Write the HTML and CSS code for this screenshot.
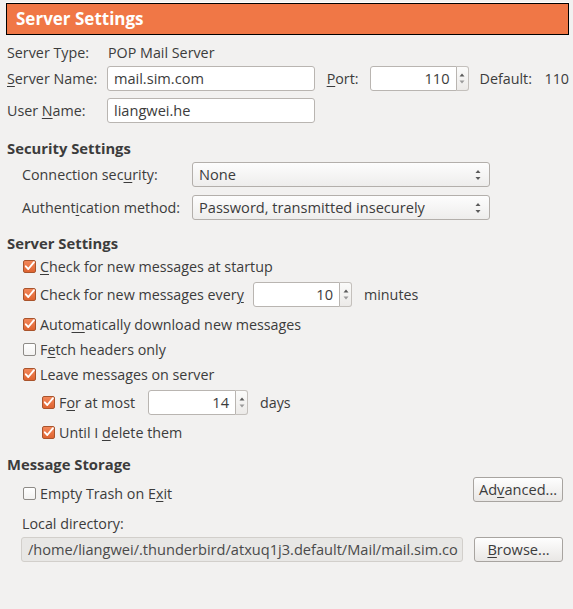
FILE: index.html
```html
<!DOCTYPE html>
<html>
<head>
<meta charset="utf-8">
<link rel="stylesheet" href="styles.css">
</head>
<body>
<div class="page">
  <div class="banner">Server Settings</div>

  <div class="row r-type">
    <span class="lbl w100">Server Type:</span>
    <span>POP Mail Server</span>
  </div>

  <div class="row r-field r-first">
    <span class="lbl w100"><u>S</u>erver Name:</span>
    <div class="entry w208">mail.sim.com</div>
    <span class="lbl port-lbl"><u>P</u>ort:</span>
    <div class="spin">
      <div class="entry spin-entry w87">110</div>
      <div class="spin-btn"><svg viewBox="0 0 12 25" width="12" height="25"><path d="M3.5 10.5 L6 7.5 L8.5 10.5 Z" fill="#5a5a5a"/><path d="M3.5 14.5 L6 17.5 L8.5 14.5 Z" fill="#9a9a9a"/></svg></div>
    </div>
    <span class="lbl default-lbl">Default:</span>
    <span>110</span>
  </div>

  <div class="row r-field r-second">
    <span class="lbl w100">User <u>N</u>ame:</span>
    <div class="entry w208">liangwei.he</div>
  </div>

  <div class="row heading">Security Settings</div>

  <div class="row r-field r-combo1 indent">
    <span class="lbl w170">Connection sec<u>u</u>rity:</span>
    <div class="combo">None<svg class="combo-arrows" viewBox="0 0 10 20" width="10" height="20"><path d="M2.5 8 L5 5 L7.5 8 Z" fill="#5a5a5a"/><path d="M2.5 12 L5 15 L7.5 12 Z" fill="#5a5a5a"/></svg></div>
  </div>

  <div class="row r-field r-combo2 indent">
    <span class="lbl w170">Authent<u>i</u>cation method:</span>
    <div class="combo">Password, transmitted insecurely<svg class="combo-arrows" viewBox="0 0 10 20" width="10" height="20"><path d="M2.5 8 L5 5 L7.5 8 Z" fill="#5a5a5a"/><path d="M2.5 12 L5 15 L7.5 12 Z" fill="#5a5a5a"/></svg></div>
  </div>

  <div class="row heading h-server">Server Settings</div>

  <div class="row cbrow cb1">
    <span class="cb on"><svg viewBox="0 0 13 13" width="13" height="13"><path d="M2.8 6.3 L5.3 9 L11 2.2" stroke="#fff" stroke-width="1.9" fill="none" stroke-linecap="round" stroke-linejoin="round"/></svg></span>
    <span><u>C</u>heck for new messages at startup</span>
  </div>

  <div class="row cbrow r-field cb2">
    <span class="cb on"><svg viewBox="0 0 13 13" width="13" height="13"><path d="M2.8 6.3 L5.3 9 L11 2.2" stroke="#fff" stroke-width="1.9" fill="none" stroke-linecap="round" stroke-linejoin="round"/></svg></span>
    <span class="w213">Check for new messages ever<u>y</u></span>
    <div class="spin">
      <div class="entry spin-entry w87">10</div>
      <div class="spin-btn"><svg viewBox="0 0 12 25" width="12" height="25"><path d="M3.5 10.5 L6 7.5 L8.5 10.5 Z" fill="#5a5a5a"/><path d="M3.5 14.5 L6 17.5 L8.5 14.5 Z" fill="#9a9a9a"/></svg></div>
    </div>
    <span class="unit">minutes</span>
  </div>

  <div class="row cbrow cb3">
    <span class="cb on"><svg viewBox="0 0 13 13" width="13" height="13"><path d="M2.8 6.3 L5.3 9 L11 2.2" stroke="#fff" stroke-width="1.9" fill="none" stroke-linecap="round" stroke-linejoin="round"/></svg></span>
    <span>Auto<u>m</u>atically download new messages</span>
  </div>

  <div class="row cbrow cb4">
    <span class="cb off"></span>
    <span>F<u>e</u>tch headers only</span>
  </div>

  <div class="row cbrow cb5">
    <span class="cb on"><svg viewBox="0 0 13 13" width="13" height="13"><path d="M2.8 6.3 L5.3 9 L11 2.2" stroke="#fff" stroke-width="1.9" fill="none" stroke-linecap="round" stroke-linejoin="round"/></svg></span>
    <span>Leave messa<u>g</u>es on server</span>
  </div>

  <div class="row cbrow sub r-field cb6">
    <span class="cb on"><svg viewBox="0 0 13 13" width="13" height="13"><path d="M2.8 6.3 L5.3 9 L11 2.2" stroke="#fff" stroke-width="1.9" fill="none" stroke-linecap="round" stroke-linejoin="round"/></svg></span>
    <span class="w89">F<u>o</u>r at most</span>
    <div class="spin">
      <div class="entry spin-entry w88">14</div>
      <div class="spin-btn"><svg viewBox="0 0 12 25" width="12" height="25"><path d="M3.5 10.5 L6 7.5 L8.5 10.5 Z" fill="#5a5a5a"/><path d="M3.5 14.5 L6 17.5 L8.5 14.5 Z" fill="#9a9a9a"/></svg></div>
    </div>
    <span class="unit">days</span>
  </div>

  <div class="row cbrow sub cb7">
    <span class="cb on"><svg viewBox="0 0 13 13" width="13" height="13"><path d="M2.8 6.3 L5.3 9 L11 2.2" stroke="#fff" stroke-width="1.9" fill="none" stroke-linecap="round" stroke-linejoin="round"/></svg></span>
    <span>Until I <u>d</u>elete them</span>
  </div>

  <div class="row heading h-storage">Message Storage</div>

  <div class="row trash-row">
    <div class="trash-lbl">
      <span class="cb off"></span>
      <span>Empty Trash on E<u>x</u>it</span>
    </div>
    <div class="btn adv">Ad<u>v</u>anced...</div>
  </div>

  <div class="row local-lbl">Local directory:</div>

  <div class="row r-field path-row">
    <div class="path">/home/liangwei/.thunderbird/atxuq1j3.default/Mail/mail.sim.co</div>
    <div class="btn browse"><u>B</u>rowse...</div>
  </div>
</div>
</body>
</html>
```

FILE: styles.css
```css
html, body {
  margin: 0;
  padding: 0;
  background: #f2f1f0;
}

body {
  font-family: "Open Sans", "Noto Sans", "DejaVu Sans", sans-serif;
  font-size: 14.3px;
  color: #3c3c3c;
}

u {
  text-decoration: underline;
  text-underline-offset: 2px;
}

.page {
  display: flex;
  flex-direction: column;
  padding: 0 4px 0 7px;
  border-top: 1px solid #f2f1f0;
}

.banner {
  margin: 2px 0 0 -1px;
  height: 32px;
  box-sizing: border-box;
  border: 1px solid #000;
  box-shadow: 0 -1px 0 #ffffff;
  background: #f07746;
  color: #ffffff;
  font-weight: bold;
  font-size: 17px;
  line-height: 29px;
  padding-left: 9px;
}

.row {
  display: flex;
  align-items: center;
  height: 18px;
  white-space: nowrap;
}

.r-field { height: 25px; }

.lbl { display: inline-block; }
.w100 { width: 100px; }
.w170 { width: 170px; }
.w208 { width: 208px; }
.w213 { width: 213px; }
.w87 { width: 87px; }
.w88 { width: 88px; }
.w89 { width: 89px; }

.r-type { margin-top: 8px; }
.r-type .lbl { width: 101px; }
.r-first { margin-top: 5px; }
.r-second { margin-top: 7px; }

.entry {
  height: 25px;
  box-sizing: border-box;
  background: #ffffff;
  border: 1px solid #b9b5b1;
  border-radius: 3px;
  padding: 0 6px;
  line-height: 23px;
  color: #3c3c3c;
  font-size: 14.6px;
}

.port-lbl { margin-left: 12px; width: 43px; }
.default-lbl { margin-left: 11px; width: 65px; }

.spin {
  display: flex;
  height: 25px;
}

.spin-entry {
  text-align: right;
  border-radius: 3px 0 0 3px;
}

.spin-btn {
  width: 12px;
  height: 25px;
  box-sizing: border-box;
  border: 1px solid #c4c0bc;
  border-left: none;
  border-radius: 0 3px 3px 0;
  background: linear-gradient(#fbfbfa, #eceae8);
  display: flex;
  justify-content: center;
}

.spin-btn svg { margin-top: -1px; flex: none; }

.unit { margin-left: 12px; }

.heading {
  font-weight: bold;
  font-size: 14.8px;
  margin-top: 16px;
}

.indent { padding-left: 15px; }

.r-combo1 { margin-top: 5px; }
.r-combo2 { margin-top: 8px; }

.combo {
  position: relative;
  width: 298px;
  height: 25px;
  box-sizing: border-box;
  border: 1px solid #b3afab;
  border-radius: 3px;
  background: linear-gradient(#fdfdfd, #eeedec);
  padding-left: 6px;
  line-height: 23px;
  font-size: 14.6px;
}

.combo-arrows {
  position: absolute;
  right: 6px;
  top: 2px;
}

.h-server { margin-top: 14px; }
.h-storage { margin-top: 14px; }

.cbrow { padding-left: 16px; }
.cbrow.sub { padding-left: 35px; }

.cb {
  flex: none;
  width: 13px;
  height: 13px;
  box-sizing: border-box;
  border-radius: 2px;
  margin-right: 4px;
  position: relative;
}

.cb.on {
  background: linear-gradient(#f2875a, #df6431);
  border: 1px solid #a9542c;
}

.cb.on svg {
  position: absolute;
  left: -1px;
  top: -1px;
}

.cb.off {
  background: linear-gradient(#ffffff, #f3f2f1);
  border: 1px solid #8e8b87;
}

.cb1 { margin-top: 5px; }
.cb2 { margin-top: 7px; }
.cb3 { margin-top: 8px; }
.cb4 { margin-top: 7px; }
.cb5 { margin-top: 7px; }
.cb6 { margin-top: 7px; }
.cb7 { margin-top: 8px; }

.trash-row {
  margin-top: 4px;
  height: 25px;
  align-items: flex-start;
  justify-content: space-between;
  padding-left: 16px;
  padding-right: 6px;
}

.trash-lbl {
  display: flex;
  align-items: center;
  height: 18px;
  margin-top: 7px;
}

.btn {
  height: 25px;
  box-sizing: border-box;
  border: 1px solid #a8a4a0;
  border-radius: 3px;
  background: linear-gradient(#fefefe, #e9e7e5);
  text-align: center;
  line-height: 23px;
  font-size: 14.6px;
}

.adv { width: 90px; }

.local-lbl {
  margin-top: 12px;
  padding-left: 15px;
}

.path-row { margin-top: 5px; }

.path {
  margin-left: 14px;
  width: 442px;
  height: 25px;
  box-sizing: border-box;
  border: 1px solid #d2cfcb;
  border-radius: 3px;
  background: #e8e7e5;
  padding-left: 6px;
  line-height: 23px;
  overflow: hidden;
  font-size: 14.6px;
  color: #4a4a4a;
}

.browse {
  margin-left: 11px;
  width: 89px;
}
```
